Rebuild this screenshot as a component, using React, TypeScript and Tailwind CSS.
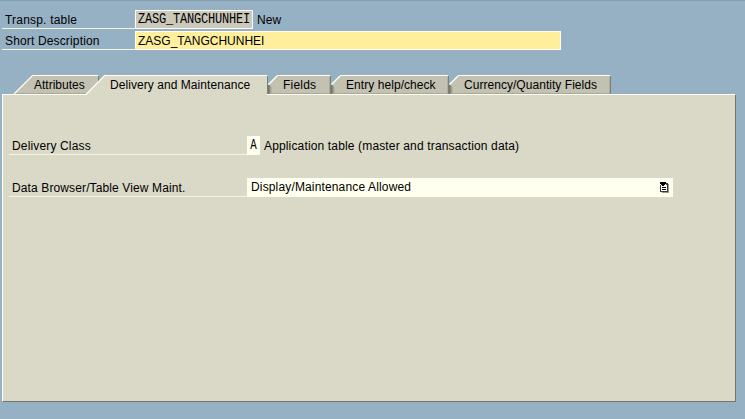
import React from "react";

type TabProps = {
  label: string;
  width: string;
  textClass: string;
  children: React.ReactNode;
};

function Tab({ label, width, textClass, children }: TabProps) {
  return (
    <div className={`relative h-[19px] shrink-0 ${width}`}>
      <svg className="absolute top-0 left-0 h-[20px] w-full overflow-visible" shapeRendering="crispEdges">
        {children}
      </svg>
      <span className={`relative block leading-[20px] ${textClass}`}>{label}</span>
    </div>
  );
}

function InactiveShape({ w }: { w: number }) {
  return (
    <>
      <path d={`M0 9 L9 0 H${w} V19 H0Z`} fill="#c3c1b2" />
      <path d="M0 10h1v9h-1z" fill="#77756b" />
      <path d="M1 10h1v9h-1z" fill="#8b897e" />
      <path d="M2 11h1v8h-1z" fill="#a3a195" />
      <path d="M3 12h1v7h-1z" fill="#b5b3a6" />
      <path d={`M2 18.5H${w}`} stroke="#aaa899" />
      <path d="M0.5 9.5L9 1" stroke="#fffff4" strokeWidth="1.4" fill="none" shapeRendering="auto" />
      <path d={`M9 .5H${w - 1}`} stroke="#fffff4" />
      <path d={`M${w - 0.5} 1V19`} stroke="#817f74" />
      <path d={`M${w - 1.5} 2V18`} stroke="#b0aea0" />
    </>
  );
}

function Label({ children, className }: { children: string; className: string }) {
  return <div className={`shrink-0 border-b ${className}`}>{children}</div>;
}

function ListIcon() {
  return (
    <svg width="9" height="11" viewBox="0 0 9 11" shapeRendering="crispEdges">
      <path d="M7 2h2v9H2v-2h5z" fill="#99978c" />
      <path d="M0 3h8v7H0zM6 1h2v2H6z" fill="#3a3934" />
      <path d="M1 3h6v6H1z" fill="#fff" />
      <path d="M0 0h6v1H0zM0 1h6v1H0zM1 2h4v1H1zM2 3h2v1H2zM2 5h4v1H2zM2 7h4v1H2z" fill="#000" />
    </svg>
  );
}

export default function App() {
  return (
    <main className="flex h-[419px] w-[745px] flex-col overflow-hidden border-t border-[#839eaf] bg-[#96b1c3] font-['Liberation_Sans',Arial,sans-serif] text-[12px] text-black">
      <section className="flex flex-col gap-[2px] pt-[9px] pl-[2px]">
        <div className="flex h-[19px]">
          <Label className="w-[133px] border-[#f6f4dd] pl-[3px] leading-[20px] tracking-[0.2px]">Transp. table</Label>
          <div className="w-[118px] border border-[#fffff4] bg-[#cbc9bb] pt-px pl-[2px] font-['Liberation_Mono',monospace] leading-[16px] tracking-[-0.2px]">
            <span className="block origin-center scale-y-[1.15]">ZASG_TANGCHUNHEI</span>
          </div>
          <span className="pl-[4px] leading-[20px] tracking-[0.1px]">New</span>
        </div>
        <div className="flex h-[19px]">
          <Label className="w-[133px] border-[#f6f4dd] pl-[3px] leading-[20px] tracking-[0.15px]">Short Description</Label>
          <div className="w-[426px] border border-[#fffff4] bg-[#ffef9c] pl-[2px] leading-[18px]">ZASG_TANGCHUNHEI</div>
        </div>
      </section>

      <nav className="mt-[25px] flex pl-[14px]">
        <Tab label="Attributes" width="w-[72px]" textClass="pl-[20px]">
          <path d="M0 19L18 0H85V19Z" fill="#c3c1b2" />
          <path d="M0 18.5H74" stroke="#aaa899" />
          <path d="M0 19L18.5 .5H84" fill="none" stroke="#fffff4" strokeWidth="1.2" shapeRendering="auto" />
          <path d="M84.5 1V6" stroke="#817f74" />
        </Tab>
        <Tab label="Delivery and Maintenance" width="w-[182px]" textClass="pl-[24px] tracking-[0.06px]">
          <path d="M0 20L19 0H182V20Z" fill="#dad8c7" />
          <path d="M0 19.5L18.5 .5H181" fill="none" stroke="#fffff4" strokeWidth="1.2" shapeRendering="auto" />
          <path d="M181.5 1V19" stroke="#817f74" />
        </Tab>
        <Tab label="Fields" width="w-[63px]" textClass="pl-[15px] tracking-[0.2px]">
          <InactiveShape w={63} />
        </Tab>
        <Tab label="Entry help/check" width="w-[118px]" textClass="pl-[15px] tracking-[0.06px]">
          <InactiveShape w={118} />
        </Tab>
        <Tab label="Currency/Quantity Fields" width="w-[162px]" textClass="pl-[15px] tracking-[0.04px]">
          <InactiveShape w={162} />
        </Tab>
      </nav>

      <section className="relative ml-[2px] h-[308px] w-[734px] border-t border-r border-b border-l border-t-[#fffff4] border-r-[#77756b] border-b-[#77756b] border-l-[#fffff4] bg-[#dad8c7] pt-[41px] pl-[6px]">
        <svg className="absolute -top-px left-[83px] h-px w-[182px]" shapeRendering="crispEdges">
          <path d="M1 0H181V1H1Z" fill="#dad8c7" />
        </svg>
        <div className="flex h-[19px]">
          <Label className="w-[238px] border-[#f6f4dd] pl-[3px] leading-[20px] tracking-[0.15px]">Delivery Class</Label>
          <div className="w-[13px] bg-[#ffffef] pt-px text-center font-['Liberation_Mono',monospace] leading-[18px]">
            <span className="block scale-x-90 scale-y-[1.15]">A</span>
          </div>
          <span className="pl-[4px] leading-[20px] tracking-[0.15px]">Application table (master and transaction data)</span>
        </div>
        <div className="mt-[23px] flex h-[19px]">
          <Label className="w-[238px] border-[#f6f4dd] pl-[3px] leading-[20px] tracking-[0.12px]">Data Browser/Table View Maint.</Label>
          <div className="flex w-[426px] justify-between bg-[#ffffef] pt-[4px] pr-[4px] pl-[4px]">
            <span className="-mt-[4px] leading-[18px] tracking-[0.15px]">Display/Maintenance Allowed</span>
            <ListIcon />
          </div>
        </div>
      </section>
    </main>
  );
}
